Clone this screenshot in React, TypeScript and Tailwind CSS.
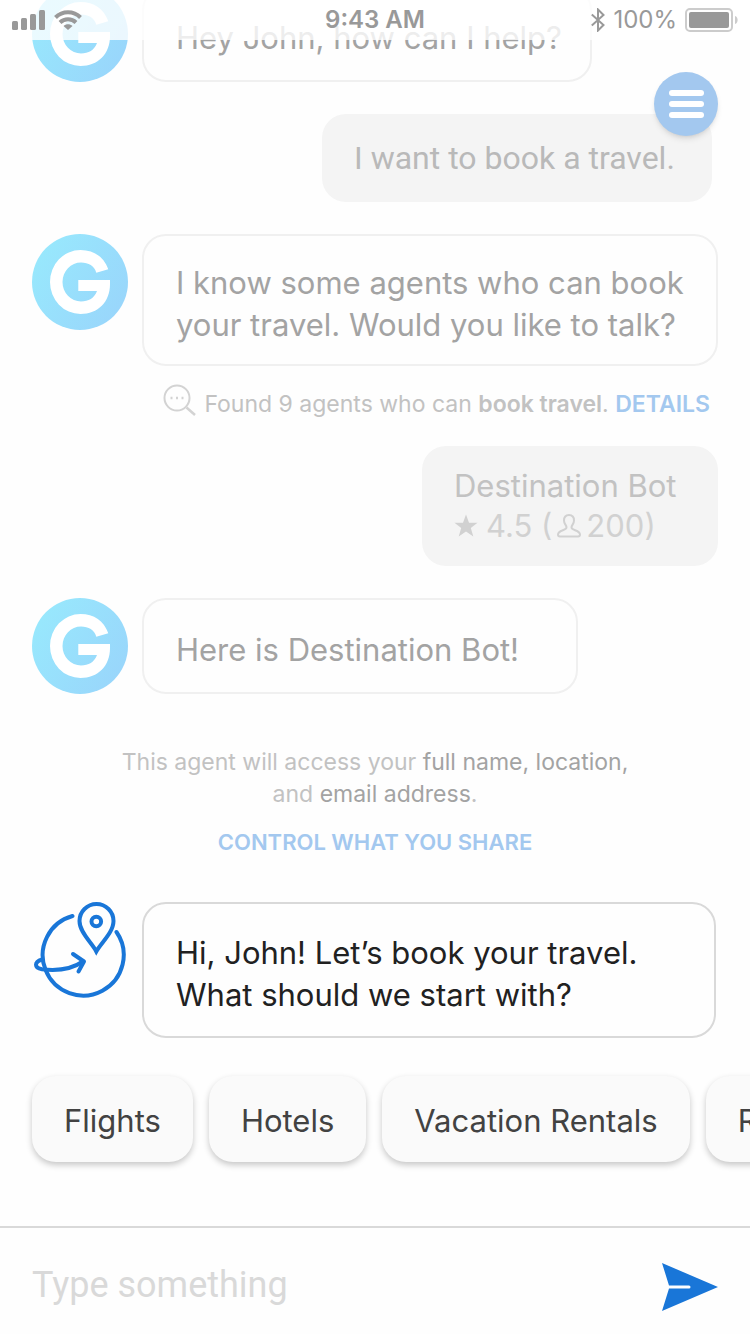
import type { ReactNode } from "react";
import clsx from "clsx";

const suggestions = ["Flights", "Hotels", "Vacation Rentals", "Rental Cars"];

const GAvatar = () => (
  <svg viewBox="0 0 96 96" className="size-24 shrink-0" role="img" aria-label="Assistant">
    <defs>
      <linearGradient id="avatar" x1="0" y1="0.2" x2="1" y2="0.8">
        <stop offset="0" stopColor="#98e9fd" />
        <stop offset="1" stopColor="#99d5fb" />
      </linearGradient>
    </defs>
    <circle cx="48" cy="48" r="48" fill="url(#avatar)" />
    <path
      d="M76.300 35.300C72 23 62 16 48.500 16A30.500 32 0 0 0 18 48A30.500 32 0 0 0 48.500 80C66 80 78 68 78 50V46H46.300V57H65C62.500 64 56.500 67.500 49 67.500A18.500 19.500 0 0 1 30.500 48A18.500 19.500 0 0 1 49 28.500C56.500 28.500 62.500 32 64.300 38.700Z"
      fill="#fff"
    />
  </svg>
);

const TravelAvatar = () => (
  <svg
    viewBox="0 0 96 96"
    className="size-24 shrink-0"
    fill="none"
    stroke="#1976d8"
    strokeWidth="4"
    strokeLinecap="round"
    role="img"
    aria-label="Destination Bot"
  >
    <path d="M40.500 14A40.500 40.500 0 1 0 84.500 30" />
    <path d="M64.300 49.500C60 41 47.500 30.500 47.500 19A17 17 0 0 1 81.500 19C81.500 30.500 69 41 64.300 49.500Z" />
    <circle cx="64.300" cy="19.500" r="4.800" />
    <path d="M10 57.500C2 60 2 66 10 67.300C24 69 40 67 51 59.500" />
    <path d="M41 52L52 59.500L46.500 69.500" strokeLinejoin="round" />
  </svg>
);

const BotMessage = ({
  children,
  avatar = <GAvatar />,
  className,
  active = false,
}: {
  children: ReactNode;
  avatar?: ReactNode;
  className?: string;
  active?: boolean;
}) => (
  <div className="flex items-start gap-[14px] px-8">
    {avatar}
    <div
      className={clsx(
        "flex items-center rounded-3xl border-2 px-8 pt-2 text-[31px] leading-[42px]",
        active ? "border-[#d9d9d9] text-[#212121]" : "border-[#f0f0f0] text-[#a3a3a3]",
        className
      )}
    >
      {children}
    </div>
  </div>
);

const StatusBar = () => (
  <div className="absolute inset-x-0 top-0 z-20 grid h-10 grid-cols-3 items-center bg-white/80 px-3 text-2xl text-[#999]">
    <div className="flex items-center gap-2">
      <svg viewBox="0 0 34 20" className="h-5 w-[34px]" fill="#999" aria-hidden="true">
        <rect x="0" y="11" width="6" height="9" rx="1.500" />
        <rect x="9" y="8" width="6" height="12" rx="1.500" />
        <rect x="18" y="4" width="6" height="16" rx="1.500" />
        <rect x="27" y="0" width="6" height="20" rx="1.500" />
      </svg>
      <svg viewBox="0 0 28 20" className="h-5 w-7" fill="none" stroke="#999" strokeWidth="4" aria-hidden="true">
        <path d="M1.500 7.500C8.500 0.500 19.500 0.500 26.500 7.500" />
        <path d="M6 12.500C10.500 8.200 17.500 8.200 22 12.500" />
        <path d="M9.500 16C12 13.700 16 13.700 18.500 16L14 20Z" fill="#999" stroke="none" />
      </svg>
    </div>
    <div className="text-center font-semibold">9:43 AM</div>
    <div className="flex items-center justify-end gap-2">
      <svg viewBox="0 0 14 24" className="h-6 w-[14px]" fill="none" stroke="#999" strokeWidth="2" aria-hidden="true">
        <path d="M0.800 6.500L12.500 17L7 22.500V1.500L12.500 7L0.800 17.500" />
      </svg>
      <span>100%</span>
      <svg viewBox="0 0 53 24" className="h-6 w-[53px]" aria-hidden="true">
        <rect x="1" y="1" width="46" height="22" rx="4" fill="none" stroke="#ccc" strokeWidth="2" />
        <rect x="4" y="4" width="40" height="16" rx="2" fill="#999" />
        <path d="M50 8C53.500 9 53.500 15 50 16Z" fill="#ccc" />
      </svg>
    </div>
  </div>
);

const App = () => {
  return (
    <div className="relative flex min-h-screen flex-col overflow-hidden bg-[#fefefe] font-['Inter',sans-serif]">
      <StatusBar />

      {/* Menu */}
      <button
        aria-label="Menu"
        className="absolute top-[72px] right-8 z-10 flex size-16 flex-col items-center justify-center gap-[5px] rounded-full bg-[#a3c8ef] shadow-md shadow-black/10"
      >
        <span className="h-[6px] w-[35px] rounded-full bg-white" />
        <span className="h-[6px] w-[35px] rounded-full bg-white" />
        <span className="h-[6px] w-[35px] rounded-full bg-white" />
      </button>

      {/* Conversation */}
      <main className="-mt-[14px] flex grow flex-col">
        <BotMessage className="h-24 w-[450px] whitespace-nowrap">Hey John, how can I help?</BotMessage>

        <div className="mt-8 mr-[38px] flex h-22 w-[390px] items-center self-end rounded-3xl bg-[#f4f4f4] px-8 font-['Roboto',sans-serif] text-[32px] text-[#b9b9b9]">
          I want to book a travel.
        </div>

        <div className="mt-8">
          <BotMessage className="h-33 w-[576px]">
            <p>
              I know some agents who can book
              <br />
              your travel. Would you like to talk?
            </p>
          </BotMessage>
        </div>

        <div className="mt-4 mr-10 flex items-start gap-2 self-end text-[23px] leading-[44px] text-[#c2c2c2]">
          <svg viewBox="0 0 34 34" className="mt-[2px] size-[34px]" fill="none" stroke="#d3d3d3" strokeWidth="2" aria-hidden="true">
            <circle cx="15" cy="14" r="12.500" />
            <path d="M24.500 23.500L33 31" strokeWidth="2.500" />
            <path d="M8.500 14H10.500M14 14H16M19.500 14H21.500" strokeWidth="2.500" />
          </svg>
          <p>
            Found 9 agents who can <b className="font-semibold">book travel</b>.{" "}
            <a href="#details" className="font-semibold text-[#a3c8ef]">
              DETAILS
            </a>
          </p>
        </div>

        {/* Selected agent */}
        <div className="mt-5 mr-8 flex h-30 w-[296px] flex-col justify-center self-end rounded-3xl bg-[#f4f4f4] px-8 text-[31px] leading-10 text-[#c2c2c2]">
          <div>Destination Bot</div>
          <div className="flex items-center text-[#d1d1d1]">
            <svg viewBox="0 0 24 24" className="mr-2 size-6" fill="#d1d1d1" aria-hidden="true">
              <path d="M12 0.500L15 8.800H23.500L16.800 14L19.300 22.500L12 17.500L4.700 22.500L7.200 14L0.500 8.800H9Z" />
            </svg>
            4.5 (
            <svg viewBox="0 0 26 26" className="mx-1 size-[26px]" fill="none" stroke="#d1d1d1" strokeWidth="2" aria-hidden="true">
              <path d="M13 2C10 2 8 4.200 8 7.500C8 11 10.500 12 10.500 14.500C10.500 17.500 2 17 2 21.500C2 22.800 2.800 23.500 4 23.500H22C23.200 23.500 24 22.800 24 21.500C24 17 15.500 17.500 15.500 14.500C15.500 12 18 11 18 7.500C18 4.200 16 2 13 2Z" />
            </svg>
            200)
          </div>
        </div>

        <div className="mt-8">
          <BotMessage className="h-24 w-[436px]">Here is Destination Bot!</BotMessage>
        </div>

        {/* Permissions */}
        <div className="mt-13 text-center text-[23px] leading-8 text-[#c2c2c2]">
          <p>
            This agent will access your <span className="text-[#a3a3a3]">full name, location,</span>
            <br />
            and <span className="text-[#a3a3a3]">email address</span>.
          </p>
          <a href="#share" className="mt-4 block text-[22px] font-semibold text-[#a3c8ef]">
            CONTROL WHAT YOU SHARE
          </a>
        </div>

        <div className="mt-11">
          <BotMessage avatar={<TravelAvatar />} active className="h-34 w-[574px]">
            <p>
              Hi, John! Let’s book your travel.
              <br />
              What should we start with?
            </p>
          </BotMessage>
        </div>

        {/* Suggestions */}
        <div className="mt-[38px] flex gap-4 pl-8">
          {suggestions.map((label) => (
            <button
              key={label}
              className="h-[86px] shrink-0 rounded-3xl bg-[#fafafa] px-8 pt-1 text-[31px] text-[#424242] shadow-[0_3px_6px_rgba(0,0,0,0.22)]"
            >
              {label}
            </button>
          ))}
        </div>
      </main>

      {/* Composer */}
      <form className="flex h-27 items-center justify-between border-t-2 border-[#d9d9d9] px-8 pt-2">
        <input
          type="text"
          aria-label="Message"
          placeholder="Type something"
          className="min-w-0 grow font-['Roboto',sans-serif] text-4xl text-[#212121] outline-none placeholder:text-[#d9d9d9]"
        />
        <button type="button" aria-label="Send">
          <svg viewBox="0 0 56 48" className="mt-1 h-12 w-14" aria-hidden="true">
            <path d="M0 0L56 24L0 48L7 25.500H27A1.500 1.500 0 0 0 27 22.500H7Z" fill="#1976d8" />
          </svg>
        </button>
      </form>
    </div>
  );
};

export default App;
